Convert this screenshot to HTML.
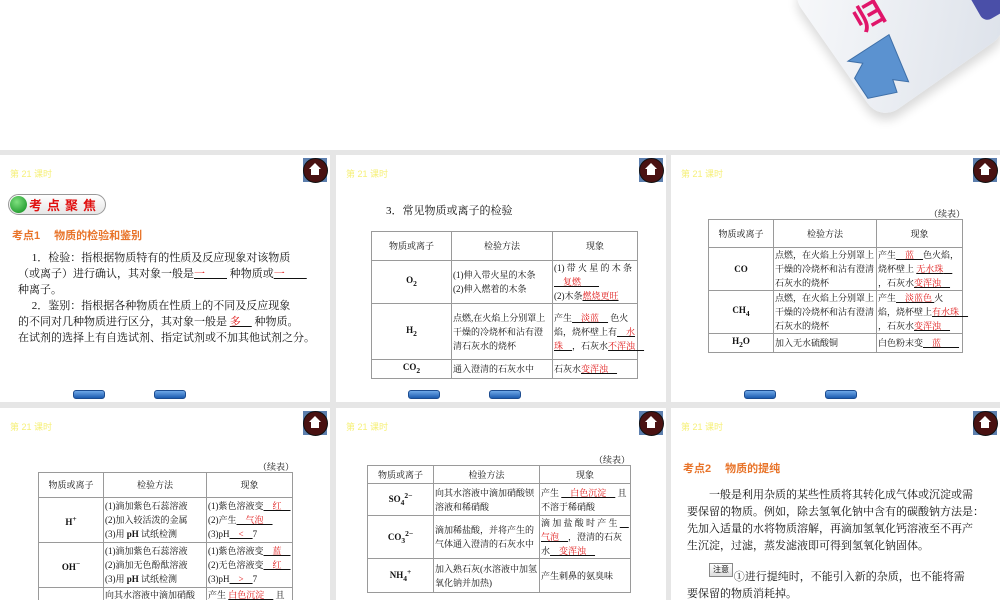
<!DOCTYPE html>
<html><head><meta charset="utf-8">
<style>
*{margin:0;padding:0;box-sizing:border-box}
body{width:1000px;height:600px;overflow:hidden;background:#e6e6e6;position:relative;font-family:"Liberation Serif","Noto Serif CJK SC","Noto Sans CJK SC",serif;color:#111}
.top{position:absolute;left:0;top:0;width:1000px;height:150px;background:#fff;overflow:hidden}
.s{position:absolute;background:#fff;overflow:hidden}
.ke{position:absolute;left:10px;top:12px;font:9px "Liberation Sans","Noto Sans CJK SC",sans-serif;color:#f6f07a}
.home{position:absolute;right:3px;top:3px;width:24px;height:24px;background:#5d7fae}
.home::before{content:"";position:absolute;left:0;top:0;width:23px;height:23px;border-radius:50%;background:#4a1212;border:1px solid #111}
.home::after{content:"";position:absolute;left:6px;top:5px;width:0;height:0;border-left:6px solid transparent;border-right:6px solid transparent;border-bottom:6px solid #fff}
.hb{position:absolute;left:8px;top:11px;width:8px;height:6px;background:#fff;z-index:2}
.btn{position:absolute;width:32px;height:9px;border-radius:3px;background:linear-gradient(#6fa8e8,#1c5cb0);border:1px solid #1c4c90}
.t{position:absolute;font-size:11px;line-height:16px;white-space:nowrap;font-family:"Liberation Serif","Noto Serif CJK SC",serif}
.or{position:absolute;color:#e8742a;font:bold 11px "Liberation Sans","Noto Sans CJK SC",sans-serif}
.r{color:#e01818}
.u{text-decoration:underline;text-decoration-color:#111}
table{position:absolute;border-collapse:collapse;font-size:9px;line-height:14px;font-family:"Liberation Serif","Noto Serif CJK SC",serif}
td{border:1px solid #9a9a9a;padding:0 1px;vertical-align:middle}
td.c{text-align:center}
.xb{position:absolute;font-size:9px;font-family:"Liberation Serif","Noto Serif CJK SC",serif}
</style></head><body>
<div class="top">
  <div style="position:absolute;left:820px;top:-70px;width:160px;height:160px;transform:rotate(-35deg);background:linear-gradient(135deg,#f8f9fb,#dde2ea);border-radius:22px;box-shadow:-4px 6px 10px rgba(0,0,0,.15)"></div>
  <div style="position:absolute;left:853px;top:-8px;font:bold 30px 'Noto Sans CJK SC',sans-serif;color:#e0156a;transform:rotate(-30deg)">归</div>
  <div style="position:absolute;left:973px;top:-20px;width:40px;height:35px;border-radius:8px;background:#4a4fa8;transform:rotate(-30deg)"></div>
  <svg style="position:absolute;left:840px;top:28px" width="85" height="80" viewBox="0 0 85 80"><g transform="translate(42,42) rotate(8)"><path d="M0 -10 L-34 -8 L-28 -8 M0 -9 L0 -9" fill="none"/><path d="M2 -36 L-35 -4 L-20 -4 L-26 12 L-10 30 L18 20 L12 8 L28 8 Z" fill="#5b92d0" stroke="#3e6fa8"/></g></svg>
</div>

<!-- slide 1 -->
<div class="s" style="left:0;top:155px;width:330px;height:247px">
  <div class="ke">第 21 课时</div><div class="home"><div class="hb"></div></div>
  <div style="position:absolute;left:8px;top:39px;width:98px;height:21px;border-radius:11px;border:1px solid #999;background:linear-gradient(#fff,#e6e6e6)"></div>
  <div style="position:absolute;left:10px;top:41px;width:17px;height:17px;border-radius:50%;background:radial-gradient(circle at 40% 35%,#7fe07f,#0a8a1a)"></div>
  <div style="position:absolute;left:29px;top:40px;font:bold 13px 'Noto Sans CJK SC',sans-serif;color:#e01010;letter-spacing:5px">考点聚焦</div>
  <div class="or" style="left:12px;top:72px">考点1　 物质的检验和鉴别</div>
  <div class="t" style="left:18px;top:95px">
    　 1．检验：指根据物质特有的性质及反应现象对该物质<br>（或离子）进行确认，其对象一般是<span class="r u">一　　</span> 种物质或<span class="r u">一　　</span><br>种离子。<br>　 2．鉴别：指根据各种物质在性质上的不同及反应现象<br>的不同对几种物质进行区分，其对象一般是 <span class="r u">多　</span> 种物质。<br>在试剂的选择上有自选试剂、指定试剂或不加其他试剂之分。
  </div>
  <div class="btn" style="left:73px;top:235px"></div><div class="btn" style="left:154px;top:235px"></div>
</div>

<!-- slide 2 -->
<div class="s" style="left:336px;top:155px;width:330px;height:247px">
  <div class="ke">第 21 课时</div><div class="home"><div class="hb"></div></div>
  <div class="t" style="left:50px;top:48px">3．常见物质或离子的检验</div>
  <table style="left:35px;top:76px;width:267px">
    <tr style="height:29px"><td class="c" style="width:80px">物质或离子</td><td class="c" style="width:101px">检验方法</td><td class="c">现象</td></tr>
    <tr style="height:43px"><td class="c"><b>O<sub>2</sub></b></td><td>(1)伸入带火星的木条<br>(2)伸入燃着的木条</td><td>(1) 带 火 星 的 木 条<br><span class="r u">　复燃　　</span><br>(2)木条<span class="r u">燃烧更旺</span></td></tr>
    <tr style="height:56px"><td class="c"><b>H<sub>2</sub></b></td><td>点燃,在火焰上分别罩上干燥的冷烧杯和沾有澄清石灰水的烧杯</td><td>产生<span class="r u">　淡蓝　</span> 色火焰，烧杯壁上有<span class="r u">　水珠　</span>，石灰水<span class="r u">不浑浊　</span></td></tr>
    <tr style="height:14px"><td class="c"><b>CO<sub>2</sub></b></td><td>通入澄清的石灰水中</td><td>石灰水<span class="r u">变浑浊　</span></td></tr>
  </table>
  <div class="btn" style="left:72px;top:235px"></div><div class="btn" style="left:153px;top:235px"></div>
</div>

<!-- slide 3 -->
<div class="s" style="left:671px;top:155px;width:329px;height:247px">
  <div class="ke">第 21 课时</div><div class="home"><div class="hb"></div></div>
  <div class="xb" style="left:258px;top:52px">（续表）</div>
  <table style="left:37px;top:64px;width:255px">
    <tr style="height:28px"><td class="c" style="width:65px">物质或离子</td><td class="c" style="width:103px">检验方法</td><td class="c">现象</td></tr>
    <tr style="height:43px"><td class="c"><b>CO</b></td><td>点燃，在火焰上分别罩上干燥的冷烧杯和沾有澄清石灰水的烧杯</td><td>产生<span class="r u">　蓝　</span>色火焰，烧杯壁上 <span class="r u">无水珠　</span>，石灰水<span class="r u">变浑浊　</span></td></tr>
    <tr style="height:42px"><td class="c"><b>CH<sub>4</sub></b></td><td>点燃，在火焰上分别罩上干燥的冷烧杯和沾有澄清石灰水的烧杯</td><td>产生<span class="r u">　淡蓝色 </span>火焰，烧杯壁上<span class="r u">有水珠　</span>，石灰水<span class="r u">变浑浊　</span></td></tr>
    <tr style="height:14px"><td class="c"><b>H<sub>2</sub>O</b></td><td>加入无水硫酸铜</td><td>白色粉末变<span class="r u">　蓝　　</span></td></tr>
  </table>
  <div class="btn" style="left:73px;top:235px"></div><div class="btn" style="left:154px;top:235px"></div>
</div>

<!-- slide 4 -->
<div class="s" style="left:0;top:408px;width:330px;height:192px">
  <div class="ke">第 21 课时</div><div class="home"><div class="hb"></div></div>
  <div class="xb" style="left:258px;top:52px">（续表）</div>
  <table style="left:38px;top:64px;width:255px">
    <tr style="height:25px"><td class="c" style="width:65px">物质或离子</td><td class="c" style="width:103px">检验方法</td><td class="c">现象</td></tr>
    <tr style="height:45px"><td class="c"><b>H<sup>+</sup></b></td><td>(1)滴加紫色石蕊溶液<br>(2)加入较活泼的金属<br>(3)用 <b>pH</b> 试纸检测</td><td>(1)紫色溶液变<span class="r u">　红　</span><br>(2)产生<span class="r u">　气泡　</span><br>(3)pH<span class="r u">　&lt;　</span>7</td></tr>
    <tr style="height:45px"><td class="c"><b>OH<sup>−</sup></b></td><td>(1)滴加紫色石蕊溶液<br>(2)滴加无色酚酞溶液<br>(3)用 <b>pH</b> 试纸检测</td><td>(1)紫色溶液变<span class="r u">　蓝　</span><br>(2)无色溶液变<span class="r u">　红　</span><br>(3)pH<span class="r u">　&gt;　</span>7</td></tr>
    <tr style="height:30px"><td></td><td style="vertical-align:top">向其水溶液中滴加硝酸</td><td style="vertical-align:top">产生 <span class="r u">白色沉淀　</span> 且</td></tr>
  </table>
</div>

<!-- slide 5 -->
<div class="s" style="left:336px;top:408px;width:330px;height:192px">
  <div class="ke">第 21 课时</div><div class="home"><div class="hb"></div></div>
  <div class="xb" style="left:258px;top:45px">（续表）</div>
  <table style="left:31px;top:57px;width:264px">
    <tr style="height:18px"><td class="c" style="width:66px">物质或离子</td><td class="c" style="width:106px">检验方法</td><td class="c">现象</td></tr>
    <tr style="height:32px"><td class="c"><b>SO<sub>4</sub><sup>2−</sup></b></td><td>向其水溶液中滴加硝酸钡溶液和稀硝酸</td><td>产生 <span class="r u">　白色沉淀　</span> 且不溶于稀硝酸</td></tr>
    <tr style="height:42px"><td class="c"><b>CO<sub>3</sub><sup>2−</sup></b></td><td>滴加稀盐酸，并将产生的气体通入澄清的石灰水中</td><td>滴 加 盐 酸 时 产 生 <span class="r u">　气泡　</span>，澄清的石灰水<span class="r u">　变浑浊　</span></td></tr>
    <tr style="height:34px"><td class="c"><b>NH<sub>4</sub><sup>+</sup></b></td><td>加入熟石灰(水溶液中加氢氧化钠并加热)</td><td>产生刺鼻的氨臭味</td></tr>
  </table>
</div>

<!-- slide 6 -->
<div class="s" style="left:671px;top:408px;width:329px;height:192px">
  <div class="ke">第 21 课时</div><div class="home"><div class="hb"></div></div>
  <div class="or" style="left:12px;top:52px">考点2　 物质的提纯</div>
  <div class="t" style="left:16px;top:79px;line-height:17px">　　一般是利用杂质的某些性质将其转化成气体或沉淀或需<br>要保留的物质。例如，除去氢氧化钠中含有的碳酸钠方法是：<br>先加入适量的水将物质溶解，再滴加氢氧化钙溶液至不再产<br>生沉淀，过滤，蒸发滤液即可得到氢氧化钠固体。</div>
  <div style="position:absolute;left:38px;top:155px;width:24px;height:14px;border:1px solid #888;background:linear-gradient(#fff,#ddd);font-size:8px;text-align:center;line-height:12px;font-family:'Noto Sans CJK SC',sans-serif">注意</div>
  <div class="t" style="left:16px;top:161px;line-height:17px">　　　　 ①进行提纯时，不能引入新的杂质，也不能将需<br>要保留的物质消耗掉。</div>
</div>
</body></html>
